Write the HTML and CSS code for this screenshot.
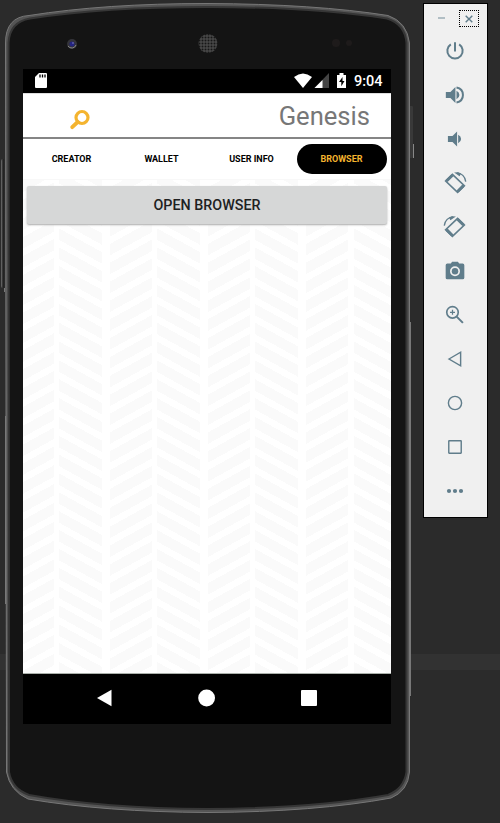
FILE: index.html
```html
<!DOCTYPE html>
<html lang="en">
<head>
<meta charset="utf-8">
<title>Genesis</title>
<link rel="stylesheet" href="styles.css">
</head>
<body>
<main class="desktop">
  <section class="phone">
    <svg class="shell" width="420" height="823" viewBox="0 0 420 823">
      <defs>
        <pattern id="speaker" width="3" height="3" patternUnits="userSpaceOnUse"><rect width="3" height="3" fill="#484848"/><circle cx="1.5" cy="1.5" r="1" fill="#171717"/></pattern>
        <linearGradient id="key" x2="1"><stop stop-color="#737373"/><stop offset=".35" stop-color="#202020"/><stop offset="1" stop-color="#3b3b3b"/></linearGradient>
      </defs>
      <rect x="1" y="159" width="6" height="129" rx="2" fill="url(#key)"/>
      <path d="M4.500 288v4" stroke="#777"/>
      <rect x="408" y="106" width="5" height="52" rx="1" fill="#393939"/>
      <path d="M413.500 144v14" stroke="#888"/>
      <path d="M5.500 43Q5.500 17 29 15.500Q105 3.500 207 3.500Q315 4 388 15.500Q407 22 409.500 43V772Q408 791 391 798Q315 812 208 812.500Q105 812 28 799Q10 791 6.500 772Z" fill="#555" stroke="#777"/>
      <path d="M8.500 43Q9.500 22 30 18.500Q105 7 207 7Q313 7 387 18.500Q405 24 406.500 43V772Q404 789 388 795Q312 808.500 208 809Q104 808.500 29 795Q12 789 9 772Z" fill="#141414" stroke="#363636" stroke-width="2"/>
      <path d="M5.500 416V604M410.500 322V696" stroke="#787878"/>
      <circle cx="72" cy="44" r="5" fill="#34343a"/><path d="M68 46a4.500 4.500 0 0 0 8-1" stroke="#858585" fill="none"/><circle cx="72" cy="44" r="2.500" fill="#242482"/><circle cx="73" cy="43" r=".8" fill="#8787c0"/>
      <circle cx="208" cy="43.500" r="9.500" fill="url(#speaker)"/>
      <circle cx="336" cy="43" r="4" fill="#1e1b1b"/><circle cx="349" cy="43" r="3" fill="#1e1b1b"/>
    </svg>
    <div class="screen">
      <div class="status">
        <svg class="sd" width="12" height="16" viewBox="0 0 12 16"><path d="M4 0h7q1 0 1 1v13q0 1-1 1H1q-1 0-1-1V4z" fill="#fff"/><path d="M5 1.500v3M7.500 1.500v3M10 1.500v3" stroke="#000" stroke-width="1.300"/></svg>
        <svg class="signals" width="54" height="16" viewBox="0 0 54 16"><path d="M0 4Q9-3 18 4L9 15z" fill="#fff"/><path d="M20.500 15L35 0v15z" fill="#444"/><path d="M20.500 15l8-8v8z" fill="#fff"/><path d="M43 2h2.500V0h4v2H52v13h-9z" fill="#fff"/><path d="M48.500 4l-3.500 5h2.300v4.200L50.500 8h-2z" fill="#000"/></svg>
        <time>9:04</time>
      </div>
      <header class="header">
        <svg width="22" height="22" viewBox="0 0 22 22" fill="none" stroke="#f4b42f"><circle cx="13" cy="8.500" r="6" stroke-width="3.200"/><path d="M8.700 13l-5.500 5.200" stroke-width="3.800" stroke-linecap="round"/></svg>
        <h1>Genesis</h1>
      </header>
      <nav class="tabs"><span>CREATOR</span><span>WALLET</span><span>USER INFO</span><span class="active">BROWSER</span></nav>
      <div class="content">
        <div class="weave">
          <div class="pair"><i class="rise"></i><i class="fall"></i></div>
          <div class="pair"><i class="rise"></i><i class="fall"></i></div>
          <div class="pair"><i class="rise"></i><i class="fall"></i></div>
          <div class="pair"><i class="rise"></i><i class="fall"></i></div>
        </div>
        <button class="open">OPEN BROWSER</button>
      </div>
      <footer class="navbar">
        <svg width="18" height="18" viewBox="0 0 18 18"><path d="M1 9L15.500.8v16.400z"/></svg>
        <svg width="18" height="18" viewBox="0 0 18 18"><circle cx="8.600" cy="9" r="8.400"/></svg>
        <svg width="18" height="18" viewBox="0 0 18 18"><rect x="1" y="1" width="16" height="16" rx="1"/></svg>
      </footer>
    </div>
  </section>
  <aside class="tools">
    <div class="window"><svg width="8" height="8"><path d="M0 4h7" stroke="#a1b1b9" stroke-width="1.600"/></svg><span class="close"><svg width="8" height="8"><path d="M.7.7l6.600 6.600M7.300.7L.7 7.300" stroke="#607d8b" stroke-width="1.400"/></svg></span></div>
    <svg class="tool" viewBox="0 0 24 24"><path d="M12 1.500v11M7 4a9.200 9.200 0 1 0 10 0"/></svg>
    <svg class="tool" viewBox="0 0 24 24"><path class="solid" d="M1 8.500v7h5.500l6 6v-19l-6 6zm12.800-1.500v10q3.500-1.500 3.500-5t-3.500-5z"/><path d="M13.800 3c10.300 2 10.300 16 0 18"/></svg>
    <svg class="tool" viewBox="0 0 24 24"><path class="solid" d="M3.500 8.500v7H9l5.500 5.500V3L9 8.500zm12.300-1.500v10q3.500-1.500 3.500-5t-3.500-5z"/></svg>
    <svg class="tool turn" viewBox="0 0 24 24"><path d="M9.200 2.500L1.800 9.900 14.800 22.300 22.200 14.900z"/><path class="edge" d="M9.200 3.500L2.800 9.900M14.800 21.300l6.400-6.400"/><path class="thin" d="M14 1c5 0 9.200 4 9.700 9.500"/><path class="solid" d="M11 .5l4.500-.3 3 1.800-1.500 2.500z"/></svg>
    <svg class="tool turn flip" viewBox="0 0 24 24"><path d="M9.200 2.500L1.800 9.900 14.800 22.300 22.200 14.900z"/><path class="edge" d="M9.200 3.500L2.800 9.900M14.800 21.300l6.400-6.400"/><path class="thin" d="M14 1c5 0 9.200 4 9.700 9.500"/><path class="solid" d="M11 .5l4.500-.3 3 1.800-1.500 2.500z"/></svg>
    <svg class="tool" viewBox="0 0 24 24"><path class="solid" fill-rule="evenodd" d="M8.500 1L7 3H2.800q-2 0-2 2v15q0 2 2 2h18.400q2 0 2-2V5q0-2-2-2H17l-1.500-2zM12 6.400a6 6 0 1 1 0 12 6 6 0 0 1 0-12z"/><circle class="solid" cx="12" cy="12.400" r="3.900"/></svg>
    <svg class="tool" viewBox="0 0 24 24"><circle cx="9" cy="8.800" r="6.900" stroke-width="2"/><path d="M14 14l7.500 7.500"/><path class="thin" d="M9 5.800v6M6 8.800h6"/></svg>
    <svg class="tool nav" viewBox="0 0 24 24"><path d="M4 12l15.500-9v18z"/></svg>
    <svg class="tool nav" viewBox="0 0 24 24"><circle cx="12" cy="12" r="8.800"/></svg>
    <svg class="tool nav" viewBox="0 0 24 24"><rect x="3.700" y="3.700" width="16.600" height="16.600" rx=".5"/></svg>
    <svg class="tool" viewBox="0 0 24 24"><g class="solid"><circle cx="4.800" cy="12" r="2.500"/><circle cx="12" cy="12" r="2.500"/><circle cx="19.200" cy="12" r="2.500"/></g></svg>
  </aside>
</main>
</body>
</html>
```
FILE: styles.css
```css
* { box-sizing: border-box; }
body { margin: 0; background: #2b2b2b; font-family: Roboto, sans-serif; }
svg { display: block; flex: none; }
.desktop { display: flex; align-items: flex-start; width: 500px; height: 823px; overflow: hidden; background: linear-gradient(#2b2b2b 654px, #323232 654px 670px, #2b2b2b 670px); }
.phone { position: relative; width: 423px; height: 823px; padding: 69px 0 0 23px; flex: none; }
.shell { position: absolute; top: 0; left: 0; }
.screen { position: relative; width: 368px; height: 655px; background: #fff; display: flex; flex-direction: column; }
.status { height: 24px; background: #000; color: #fff; display: flex; align-items: center; padding: 1px 7px 0 12px; font-size: 14.500px; font-weight: 500; flex: none; }
.sd { margin-bottom: 1px; }
.signals { margin: 0 6px 1px auto; }
.status time { width: 30px; white-space: nowrap; }
.header { height: 46px; border-top: 1px solid #ddd; border-bottom: 2px solid #858585; display: flex; align-items: center; justify-content: space-between; padding: 9px 21px 0 46px; flex: none; }
.header h1 { margin: 0 0 8px; font-size: 25.600px; font-weight: 400; line-height: 30px; color: #777; }
.tabs { height: 40px; padding: 4.500px 4px 4px; display: grid; grid-template-columns: repeat(4, 1fr); flex: none; font-size: 9px; font-weight: 700; color: #000; }
.tabs span { display: flex; align-items: center; justify-content: center; height: 30.500px; padding-right: 1px; border-radius: 16px; }
.tabs .active { background: #000; color: #f4b42f; }
.content { position: relative; flex: 1; overflow: hidden; background: #fff; padding: 6px 4px; border-top: 1px solid #f8f8f8; }
.weave { position: absolute; left: -11.700px; top: 0; bottom: 0; display: flex; gap: 8px; }
.pair { display: flex; gap: 5.200px; }
.rise, .fall { position: relative; width: 42.500px; overflow: hidden; }
.rise::before, .fall::before { content: ""; position: absolute; left: 0; right: 0; bottom: -30px; background: repeating-linear-gradient(#fafafa 0 11.500px, #fff 11.500px 18.850px); }
.rise::before { top: -35.250px; transform: skewY(-28.940deg); transform-origin: right top; }
.fall::before { top: -26.700px; transform: skewY(28.940deg); transform-origin: left top; }
.open { position: relative; display: block; width: 100%; height: 38px; border: 0; border-radius: 2px; background: #d6d7d7; color: #202121; font: 500 14.300px Roboto, sans-serif; box-shadow: 0 1px 2px #aaa; }
.navbar { height: 51px; background: #000; border-top: 1px solid #aab0aa; display: flex; justify-content: space-between; padding: 15px 73px; flex: none; fill: #fff; }
.tools { width: 65px; height: 515px; margin-top: 3px; padding-right: 2px; border: 1px solid #000; background: #f0f0f0; display: flex; flex-direction: column; align-items: center; flex: none; }
.window { align-self: stretch; height: 25px; margin-bottom: 10px; padding: 6px 6px 0 14px; display: flex; justify-content: space-between; flex: none; }
.window > svg { margin-top: 4px; }
.close { width: 20px; height: 17px; border: 1px dotted #000; display: flex; align-items: center; justify-content: center; }
.tool { width: 24px; height: 24px; margin-bottom: 20px; padding: 2px; overflow: visible; fill: none; stroke: #607d8b; stroke-width: 2.400; }
.tool .solid { fill: #607d8b; stroke: none; }
.tool .thin { stroke-width: 1.500; }
.turn { padding: 1px; stroke-width: 1.800; }
.turn .edge { stroke-width: 3.200; }
.flip { transform: scaleX(-1); }
.nav { padding: 3px; stroke-width: 1.900; }
```
